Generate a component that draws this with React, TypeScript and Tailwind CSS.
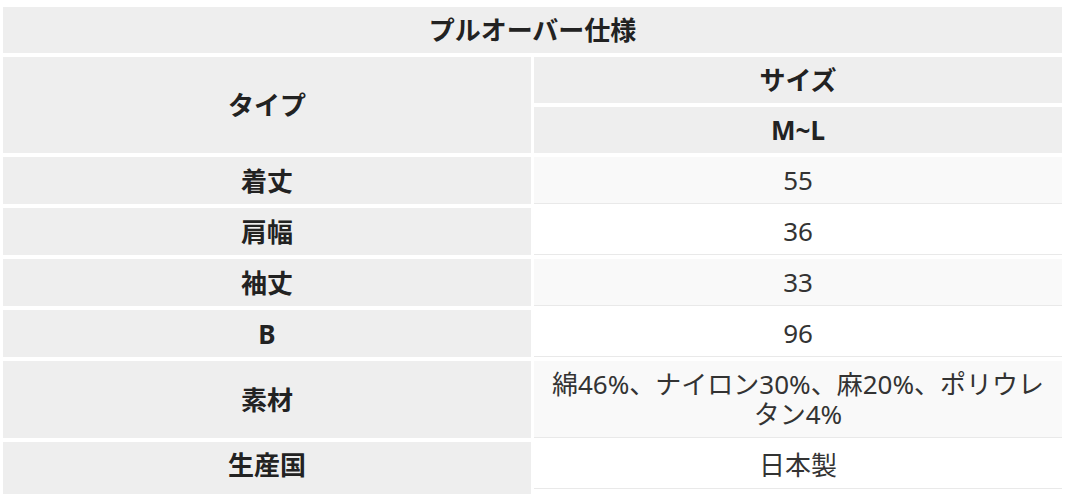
const rows: { label: string; value: string }[] = [
  { label: "着丈", value: "55" },
  { label: "肩幅", value: "36" },
  { label: "袖丈", value: "33" },
  { label: "B", value: "96" },
  { label: "素材", value: "綿46%、ナイロン30%、麻20%、ポリウレタン4%" },
  { label: "生産国", value: "日本製" },
];

export default function App() {
  return (
    <div className="min-h-screen bg-white font-['Noto_Sans','Noto_Sans_CJK_JP',sans-serif] text-[26px] leading-[30px]">
      <div className="grid grid-cols-2 gap-x-[3px] gap-y-[4px] px-[3px] pt-[7px]">
        {/* Title */}
        <div className="col-span-2 bg-[#eeeeee] py-2 text-center font-bold text-[#222]">
          プルオーバー仕様
        </div>

        {/* Header */}
        <div className="row-span-2 flex items-center justify-center bg-[#eeeeee] font-bold text-[#222]">
          タイプ
        </div>
        <div className="bg-[#eeeeee] py-2 text-center font-bold text-[#222]">サイズ</div>
        <div className="bg-[#eeeeee] py-2 text-center font-bold text-[#222]">M~L</div>

        {/* Data rows */}
        {rows.map((row, i) => {
          const last = i === rows.length - 1;
          return [
            <div
              key={row.label}
              className={`flex justify-center bg-[#eeeeee] font-bold text-[#222] ${
                last ? "items-start pt-2 pb-[14px]" : "items-center"
              }`}
            >
              {row.label}
            </div>,
            <div
              key={row.label + "-v"}
              className={`border-b border-[#e9e9e9] px-[10px] py-2 text-center text-[#333] ${
                i % 2 === 0 ? "bg-[#f9f9f9]" : "bg-white"
              } ${last ? "self-start" : ""}`}
            >
              {row.value}
            </div>,
          ];
        })}
      </div>
    </div>
  );
}
